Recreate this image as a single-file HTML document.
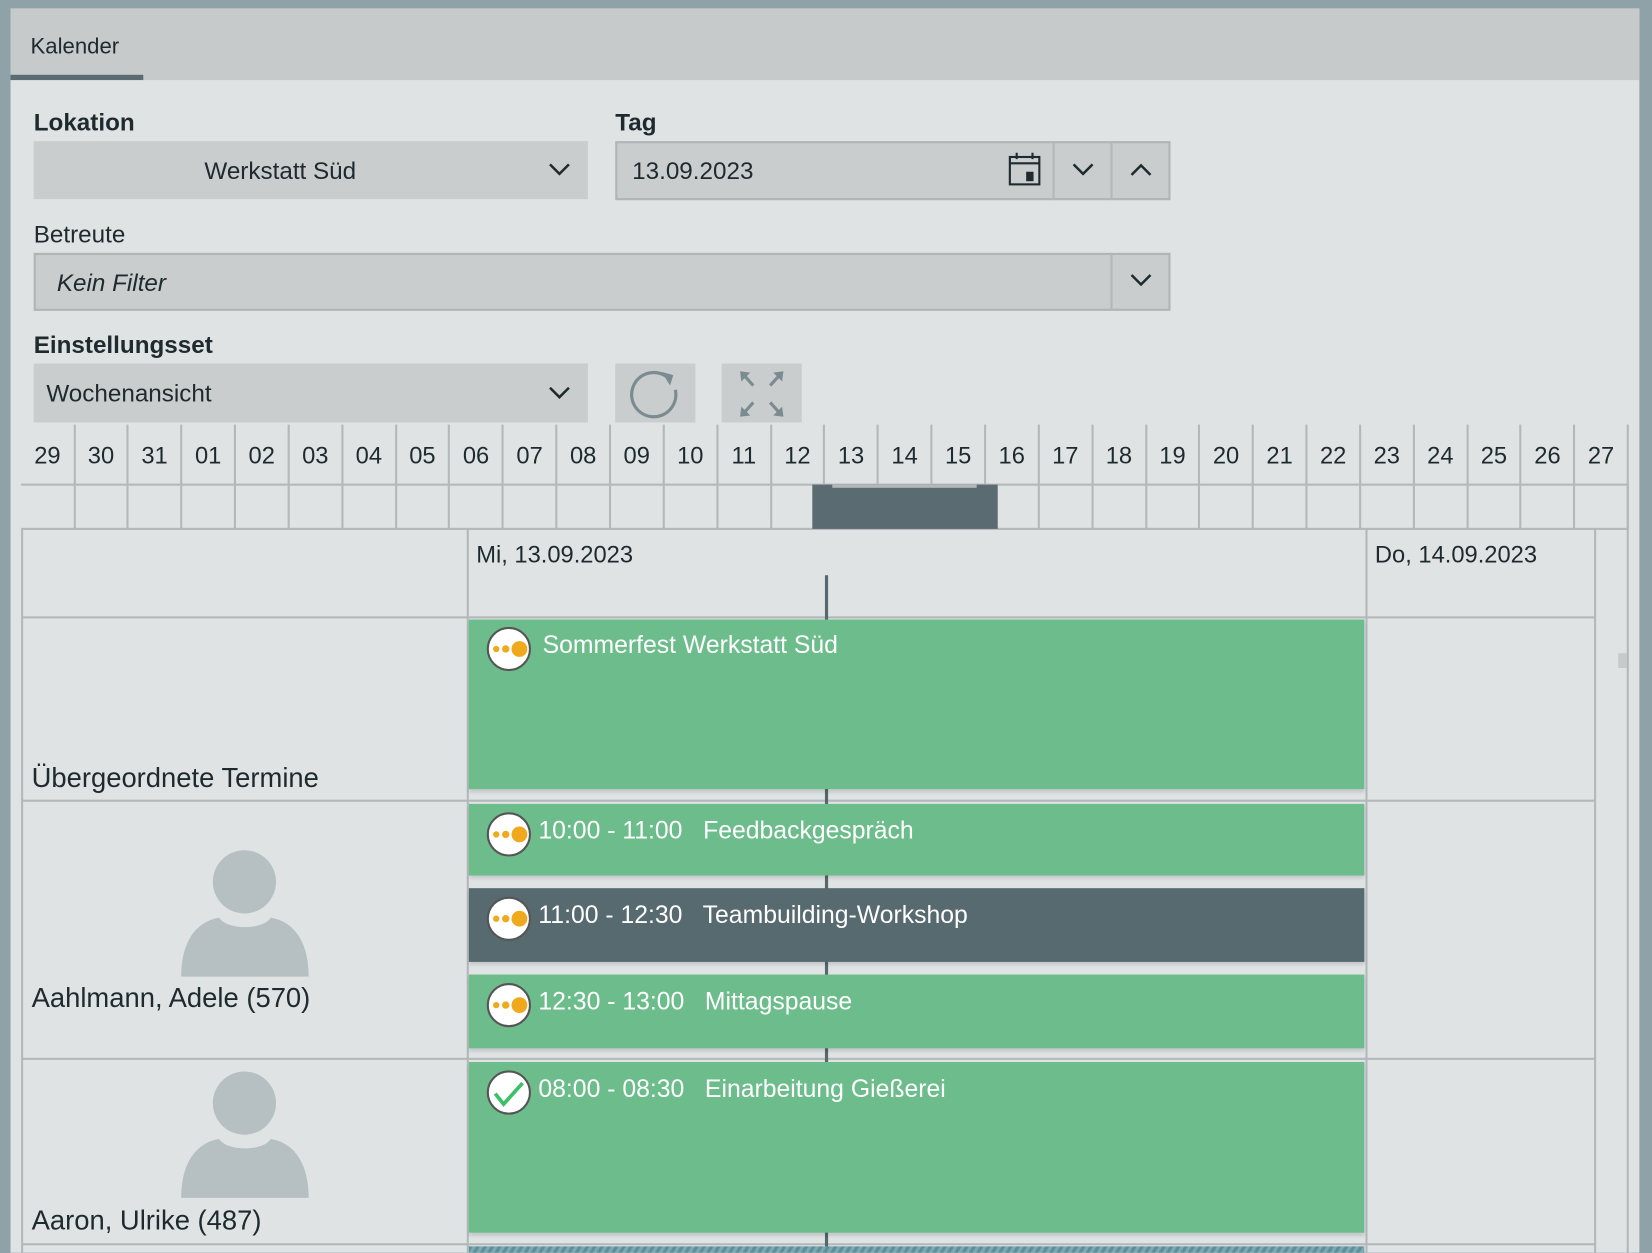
<!DOCTYPE html>
<html><head><meta charset="utf-8"><style>
html,body{margin:0;padding:0;width:1652px;height:1253px;overflow:hidden;background:#8fa2a8;}
#w{position:absolute;left:0;top:0;width:1568px;height:1189px;transform:scale(1.053571);transform-origin:0 0;font-family:"Liberation Sans",sans-serif;color:#1e2a2e;}
.a{position:absolute;}
.t{position:absolute;white-space:nowrap;line-height:1;}
.box{position:absolute;background:#c9cdce;box-sizing:border-box;}
.vl{position:absolute;width:2px;background:#b3b8ba;}
.hl{position:absolute;height:2px;background:#b3b8ba;}
.ev{position:absolute;left:445px;width:850px;background:#6cbd8b;box-shadow:0 3px 3px rgba(0,0,0,.12);}
.ev .t{color:#fff;font-size:23.5px;}
.ic{position:absolute;left:17px;width:42px;height:42px;border-radius:50%;background:#fff;border:2px solid #555;box-sizing:border-box;}
</style></head><body><div id="w">
<div class="a" style="left:10px;top:8px;width:1546px;height:1181px;background:#dfe3e4"></div>
<div class="a" style="left:10px;top:8px;width:1546px;height:68px;background:#c6cacb"></div>
<div class="t" style="left:29px;top:34px;font-size:21px">Kalender</div>
<div class="a" style="left:10px;top:71px;width:126px;height:5px;background:#5a6b71"></div>

<div class="t" style="left:32px;top:105px;font-size:23px;font-weight:bold">Lokation</div>
<div class="box" style="left:32px;top:134px;width:526px;height:55px"></div>
<div class="t" style="left:194px;top:151px;font-size:23px">Werkstatt Süd</div>
<svg class="a" style="left:520px;top:153px" width="22" height="16"><path d="M2 3l9 9 9-9" fill="none" stroke="#1e2a2e" stroke-width="2.4"/></svg>

<div class="t" style="left:584px;top:105px;font-size:23px;font-weight:bold">Tag</div>
<div class="box" style="left:584px;top:134px;width:527px;height:56px;border:2px solid #b0b5b7"></div>
<div class="vl" style="left:999px;top:134px;height:56px"></div>
<div class="vl" style="left:1054px;top:134px;height:56px"></div>
<div class="t" style="left:600px;top:151px;font-size:23px">13.09.2023</div>
<svg class="a" style="left:955px;top:144px" width="34" height="34"><rect x="3.5" y="5" width="28" height="26" fill="none" stroke="#1e2a2e" stroke-width="2"/><line x1="3.5" y1="11" x2="31.5" y2="11" stroke="#1e2a2e" stroke-width="2"/><line x1="10" y1="1" x2="10" y2="7" stroke="#1e2a2e" stroke-width="2"/><line x1="25" y1="1" x2="25" y2="7" stroke="#1e2a2e" stroke-width="2"/><rect x="19" y="19" width="7" height="9" fill="#1e2a2e"/></svg>
<svg class="a" style="left:1017px;top:153px" width="22" height="16"><path d="M2 3l9 9 9-9" fill="none" stroke="#1e2a2e" stroke-width="2.4"/></svg>
<svg class="a" style="left:1072px;top:153px" width="22" height="16"><path d="M2 13l9-9 9 9" fill="none" stroke="#1e2a2e" stroke-width="2.4"/></svg>

<div class="t" style="left:32px;top:211px;font-size:23px">Betreute</div>
<div class="box" style="left:32px;top:240px;width:1079px;height:55px;border:2px solid #b0b5b7"></div>
<div class="vl" style="left:1054px;top:240px;height:55px"></div>
<div class="t" style="left:54px;top:257px;font-size:23px;font-style:italic">Kein Filter</div>
<svg class="a" style="left:1072px;top:258px" width="22" height="16"><path d="M2 3l9 9 9-9" fill="none" stroke="#1e2a2e" stroke-width="2.4"/></svg>

<div class="t" style="left:32px;top:316px;font-size:23px;font-weight:bold">Einstellungsset</div>
<div class="box" style="left:32px;top:345px;width:526px;height:56px"></div>
<div class="t" style="left:44px;top:362px;font-size:23px">Wochenansicht</div>
<svg class="a" style="left:520px;top:365px" width="22" height="16"><path d="M2 3l9 9 9-9" fill="none" stroke="#1e2a2e" stroke-width="2.4"/></svg>
<div class="box" style="left:584px;top:345px;width:76px;height:56px"></div>
<svg class="a" style="left:597px;top:349px" width="52" height="50"><path d="M35 8 A21 21 0 1 0 44 21" fill="none" stroke="#7a8c92" stroke-width="3"/><path d="M31 4l11 3-3 10z" fill="#7a8c92"/></svg>
<div class="box" style="left:685px;top:345px;width:76px;height:56px"></div>
<svg class="a" style="left:698px;top:348px" width="50" height="50"><g stroke="#7a8c92" stroke-width="3" fill="#7a8c92"><line x1="8" y1="8" x2="17" y2="18"/><line x1="42" y1="8" x2="33" y2="18"/><line x1="8" y1="44" x2="17" y2="34"/><line x1="42" y1="44" x2="33" y2="34"/><path d="M5 5l8 1-7 7z" stroke-width="1"/><path d="M45 5l-8 1 7 7z" stroke-width="1"/><path d="M5 47l8-1-7-7z" stroke-width="1"/><path d="M45 47l-8-1 7-7z" stroke-width="1"/></g></svg>

<div id="ruler"></div>
<div class="hl" style="left:20px;top:459px;width:1526px"></div>
<div class="hl" style="left:20px;top:501px;width:1526px"></div>
<div class="a" style="left:771px;top:460px;width:176px;height:42px;background:#5a6b71"></div>
<div class="a" style="left:790px;top:460px;width:137px;height:3px;background:#b3b8ba"></div>

<div class="vl" style="left:20px;top:502px;height:687px"></div>
<div class="vl" style="left:443px;top:502px;height:687px"></div>
<div class="vl" style="left:1296px;top:502px;height:687px"></div>
<div class="vl" style="left:1513px;top:502px;height:687px"></div>
<div class="vl" style="left:1544px;top:460px;height:729px"></div>
<div class="a" style="left:1536px;top:620px;width:8px;height:14px;background:#c6cacb"></div>
<div class="hl" style="left:20px;top:585px;width:1494px"></div>
<div class="hl" style="left:20px;top:759px;width:1494px"></div>
<div class="hl" style="left:20px;top:1004px;width:1494px"></div>
<div class="hl" style="left:20px;top:1180px;width:1494px"></div>
<div class="a" style="left:783px;top:546px;width:3px;height:643px;background:#56676d"></div>
<div class="t" style="left:452px;top:516px;font-size:22.5px">Mi, 13.09.2023</div>
<div class="t" style="left:1305px;top:516px;font-size:22.5px">Do, 14.09.2023</div>

<div class="t" style="left:30px;top:725px;font-size:26px">Übergeordnete Termine</div>
<div class="t" style="left:30px;top:934px;font-size:26px">Aahlmann, Adele (570)</div>
<div class="t" style="left:30px;top:1145px;font-size:26px">Aaron, Ulrike (487)</div>
<svg class="a" style="left:170px;top:805px" width="125" height="124"><circle cx="62" cy="32" r="30" fill="#b6c0c2"/><path d="M2 122 C2 90 15 70 38 66 C45 78 80 78 87 66 C110 70 123 90 123 122Z" fill="#b6c0c2"/></svg>
<svg class="a" style="left:170px;top:1015px" width="125" height="124"><circle cx="62" cy="32" r="30" fill="#b6c0c2"/><path d="M2 122 C2 90 15 70 38 66 C45 78 80 78 87 66 C110 70 123 90 123 122Z" fill="#b6c0c2"/></svg>

<div class="ev" style="top:588px;height:161px"><div class="ic" style="top:7px"><svg width="38" height="38"><circle cx="7" cy="19" r="3" fill="#f0a81c"/><circle cx="16" cy="19" r="3.5" fill="#f0a81c"/><circle cx="29" cy="19" r="7.5" fill="#f0a81c"/></svg></div><div class="t" style="left:70px;top:13px">Sommerfest Werkstatt Süd</div></div>
<div class="ev" style="top:763px;height:68px"><div class="ic" style="top:8px"><svg width="38" height="38"><circle cx="7" cy="19" r="3" fill="#f0a81c"/><circle cx="16" cy="19" r="3.5" fill="#f0a81c"/><circle cx="29" cy="19" r="7.5" fill="#f0a81c"/></svg></div><div class="t" style="left:66px;top:14px">10:00 - 11:00&nbsp;&nbsp; Feedbackgespräch</div></div>
<div class="ev" style="top:843px;height:70px;background:#566a70"><div class="ic" style="top:8px"><svg width="38" height="38"><circle cx="7" cy="19" r="3" fill="#f0a81c"/><circle cx="16" cy="19" r="3.5" fill="#f0a81c"/><circle cx="29" cy="19" r="7.5" fill="#f0a81c"/></svg></div><div class="t" style="left:66px;top:14px">11:00 - 12:30&nbsp;&nbsp; Teambuilding-Workshop</div></div>
<div class="ev" style="top:925px;height:70px"><div class="ic" style="top:8px"><svg width="38" height="38"><circle cx="7" cy="19" r="3" fill="#f0a81c"/><circle cx="16" cy="19" r="3.5" fill="#f0a81c"/><circle cx="29" cy="19" r="7.5" fill="#f0a81c"/></svg></div><div class="t" style="left:66px;top:14px">12:30 - 13:00&nbsp;&nbsp; Mittagspause</div></div>
<div class="ev" style="top:1008px;height:162px"><div class="ic" style="top:8px"><svg width="38" height="38"><path d="M6 20l8 10 18-20" fill="none" stroke="#3cc06a" stroke-width="3.5"/></svg></div><div class="t" style="left:66px;top:14px">08:00 - 08:30&nbsp;&nbsp; Einarbeitung Gießerei</div></div>
<div class="a" style="left:445px;top:1183px;width:850px;height:6px;background:repeating-linear-gradient(120deg,#5d8f9b 0 3px,#7aa8b3 3px 6px)"></div>
</div>
<script>
var r=document.getElementById('ruler'),h='',n=['29','30','31'];
for(var i=1;i<=27;i++)n.push((i<10?'0':'')+i);
for(var i=0;i<30;i++){var x=20+i*50.85;
h+='<div class="t" style="left:'+x+'px;top:422px;width:50px;text-align:center;font-size:22.5px">'+n[i]+'</div>';
h+='<div class="vl" style="left:'+(x+49.5)+'px;top:403px;height:57px"></div>';
h+='<div class="vl" style="left:'+(x+49.5)+'px;top:461px;height:41px"></div>';}
r.innerHTML=h;
</script>
</body></html>
